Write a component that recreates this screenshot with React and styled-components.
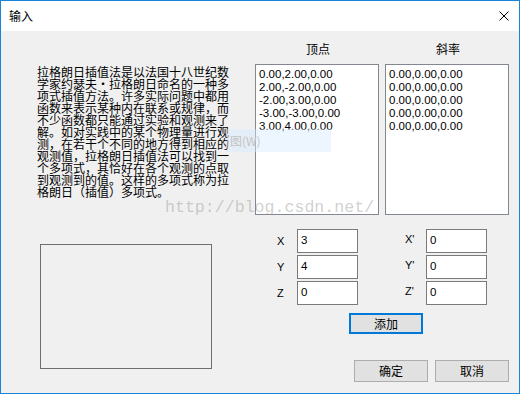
import React from 'react';
import styled, { createGlobalStyle } from 'styled-components';

const GlobalStyle = createGlobalStyle`
  html, body {
    margin: 0;
    padding: 0;
    background: #ffffff;
  }
  * {
    box-sizing: border-box;
  }
`;

const cjk = `"Noto Sans CJK SC", "Noto Sans", sans-serif`;
const latin = `"Liberation Sans", "Noto Sans CJK SC", sans-serif`;

const Window = styled.div`
  position: relative;
  width: 520px;
  height: 394px;
  border: 1px solid #1883d7;
  display: flex;
  flex-direction: column;
  font-family: ${cjk};
  font-size: 12px;
  color: #000000;
  overflow: hidden;
`;

const TitleBar = styled.div`
  height: 30px;
  background: #ffffff;
  display: flex;
  align-items: center;
  justify-content: space-between;
  padding: 0 10px 0 8px;
`;

const Title = styled.span`
  font-size: 12px;
  line-height: 14px;
`;

const Body = styled.div`
  flex: 1;
  background: #f0f0f0;
  display: flex;
`;

const LeftColumn = styled.div`
  width: 254px;
  padding: 35px 0 0 36px;
  display: flex;
  flex-direction: column;
`;

const Paragraph = styled.div`
  width: 194px;
  font-size: 12px;
  line-height: 12px;
  white-space: pre;
  letter-spacing: 0;
`;

const EmptyPanel = styled.div`
  margin: 46px 0 0 3px;
  width: 172px;
  height: 125px;
  border: 1px solid #6e6e6e;
`;

const RightColumn = styled.div`
  width: 254px;
  padding-bottom: 11px;
  display: flex;
  flex-direction: column;
`;

const ListsRow = styled.div`
  display: flex;
  gap: 6px;
`;

const ListColumn = styled.div`
  display: flex;
  flex-direction: column;
  width: 124px;
`;

const Header = styled.div`
  height: 14px;
  line-height: 14px;
  margin: 11px 0 8px;
  text-align: center;
  padding-left: 2px;
`;

const ListBox = styled.div`
  height: 151px;
  border: 1px solid #828790;
  background: #ffffff;
  padding: 3px 3px;
  font-family: ${latin};
  font-size: 11.5px;
  line-height: 13px;
`;

const InputsGrid = styled.div`
  margin: 14px 0 0 22px;
  display: grid;
  grid-template-columns: 20px 61px 47px 21px 61px;
  grid-auto-rows: 24px;
  row-gap: 2px;
`;

const FieldLabel = styled.span`
  font-family: ${latin};
  font-size: 11px;
  display: flex;
  align-items: center;
  padding-bottom: ${(p) => (p.$prime ? '4px' : '0')};
`;

const Field = styled.div`
  border: 1px solid #7a7a7a;
  background: #ffffff;
  font-family: ${latin};
  font-size: 11.5px;
  padding: 3px 3px;
  line-height: 14px;
`;

const Button = styled.button`
  font-family: ${cjk};
  font-size: 12px;
  color: #000000;
  background: #e1e1e1;
  border: 1px solid #adadad;
  width: 74px;
  height: 22px;
  padding: 0;
  line-height: 14px;
`;

const AddButton = styled(Button)`
  margin: 8px 0 0 94px;
  height: 21px;
  border: 2px solid #0078d7;
`;

const Footer = styled.div`
  margin-top: auto;
  display: flex;
  justify-content: flex-end;
  gap: 7px;
  padding-right: 0;
`;

const Highlight = styled.div`
  position: absolute;
  left: 226px;
  top: 128px;
  width: 104px;
  height: 23px;
  background: rgba(214, 232, 252, 0.45);
  color: #c4c4c4;
  font-size: 12px;
  line-height: 23px;
  padding-left: 3px;
`;

const Watermark = styled.div`
  position: absolute;
  left: 164px;
  top: 198px;
  font-family: "Liberation Mono", monospace;
  font-size: 16.6px;
  color: rgba(150, 150, 150, 0.45);
  line-height: 18px;
`;

const lines = [
  '拉格朗日插值法是以法国十八世纪数',
  '学家约瑟夫·拉格朗日命名的一种多',
  '项式插值方法。许多实际问题中都用',
  '函数来表示某种内在联系或规律，而',
  '不少函数都只能通过实验和观测来了',
  '解。如对实践中的某个物理量进行观',
  '测，在若干个不同的地方得到相应的',
  '观测值，拉格朗日插值法可以找到一',
  '个多项式，其恰好在各个观测的点取',
  '到观测到的值。这样的多项式称为拉',
  '格朗日（插值）多项式。',
];

const vertices = ['0.00,2.00,0.00', '2.00,-2.00,0.00', '-2.00,3.00,0.00', '-3.00,-3.00,0.00', '3.00,4.00,0.00'];
const slopes = Array(5).fill('0.00,0.00,0.00');

const fields = [
  ['X', '3', "X'", '0'],
  ['Y', '4', "Y'", '0'],
  ['Z', '0', "Z'", '0'],
];

function CloseIcon() {
  return (
    <svg width="10" height="10" viewBox="0 0 10 10">
      <path d="M0.5 0.5 L9.5 9.5 M9.5 0.5 L0.5 9.5" stroke="#000" strokeWidth="1" />
    </svg>
  );
}

export default function App() {
  return (
    <>
      <GlobalStyle />
      <Window>
        <TitleBar>
          <Title>输入</Title>
          <CloseIcon />
        </TitleBar>
        <Body>
          <LeftColumn>
            <Paragraph>{lines.join('\n')}</Paragraph>
            <EmptyPanel />
          </LeftColumn>
          <RightColumn>
            <ListsRow>
              <ListColumn>
                <Header>顶点</Header>
                <ListBox>
                  {vertices.map((v) => (
                    <div key={v}>{v}</div>
                  ))}
                </ListBox>
              </ListColumn>
              <ListColumn>
                <Header>斜率</Header>
                <ListBox>
                  {slopes.map((v, i) => (
                    <div key={i}>{v}</div>
                  ))}
                </ListBox>
              </ListColumn>
            </ListsRow>
            <InputsGrid>
              {fields.map(([a, av, b, bv]) => (
                <React.Fragment key={a}>
                  <FieldLabel>{a}</FieldLabel>
                  <Field>{av}</Field>
                  <span />
                  <FieldLabel $prime>{b}</FieldLabel>
                  <Field>{bv}</Field>
                </React.Fragment>
              ))}
            </InputsGrid>
            <AddButton>添加</AddButton>
            <Footer>
              <Button>确定</Button>
              <Button>取消</Button>
            </Footer>
          </RightColumn>
        </Body>
        <Highlight>图(W)</Highlight>
        <Watermark>http://blog.csdn.net/</Watermark>
      </Window>
    </>
  );
}
